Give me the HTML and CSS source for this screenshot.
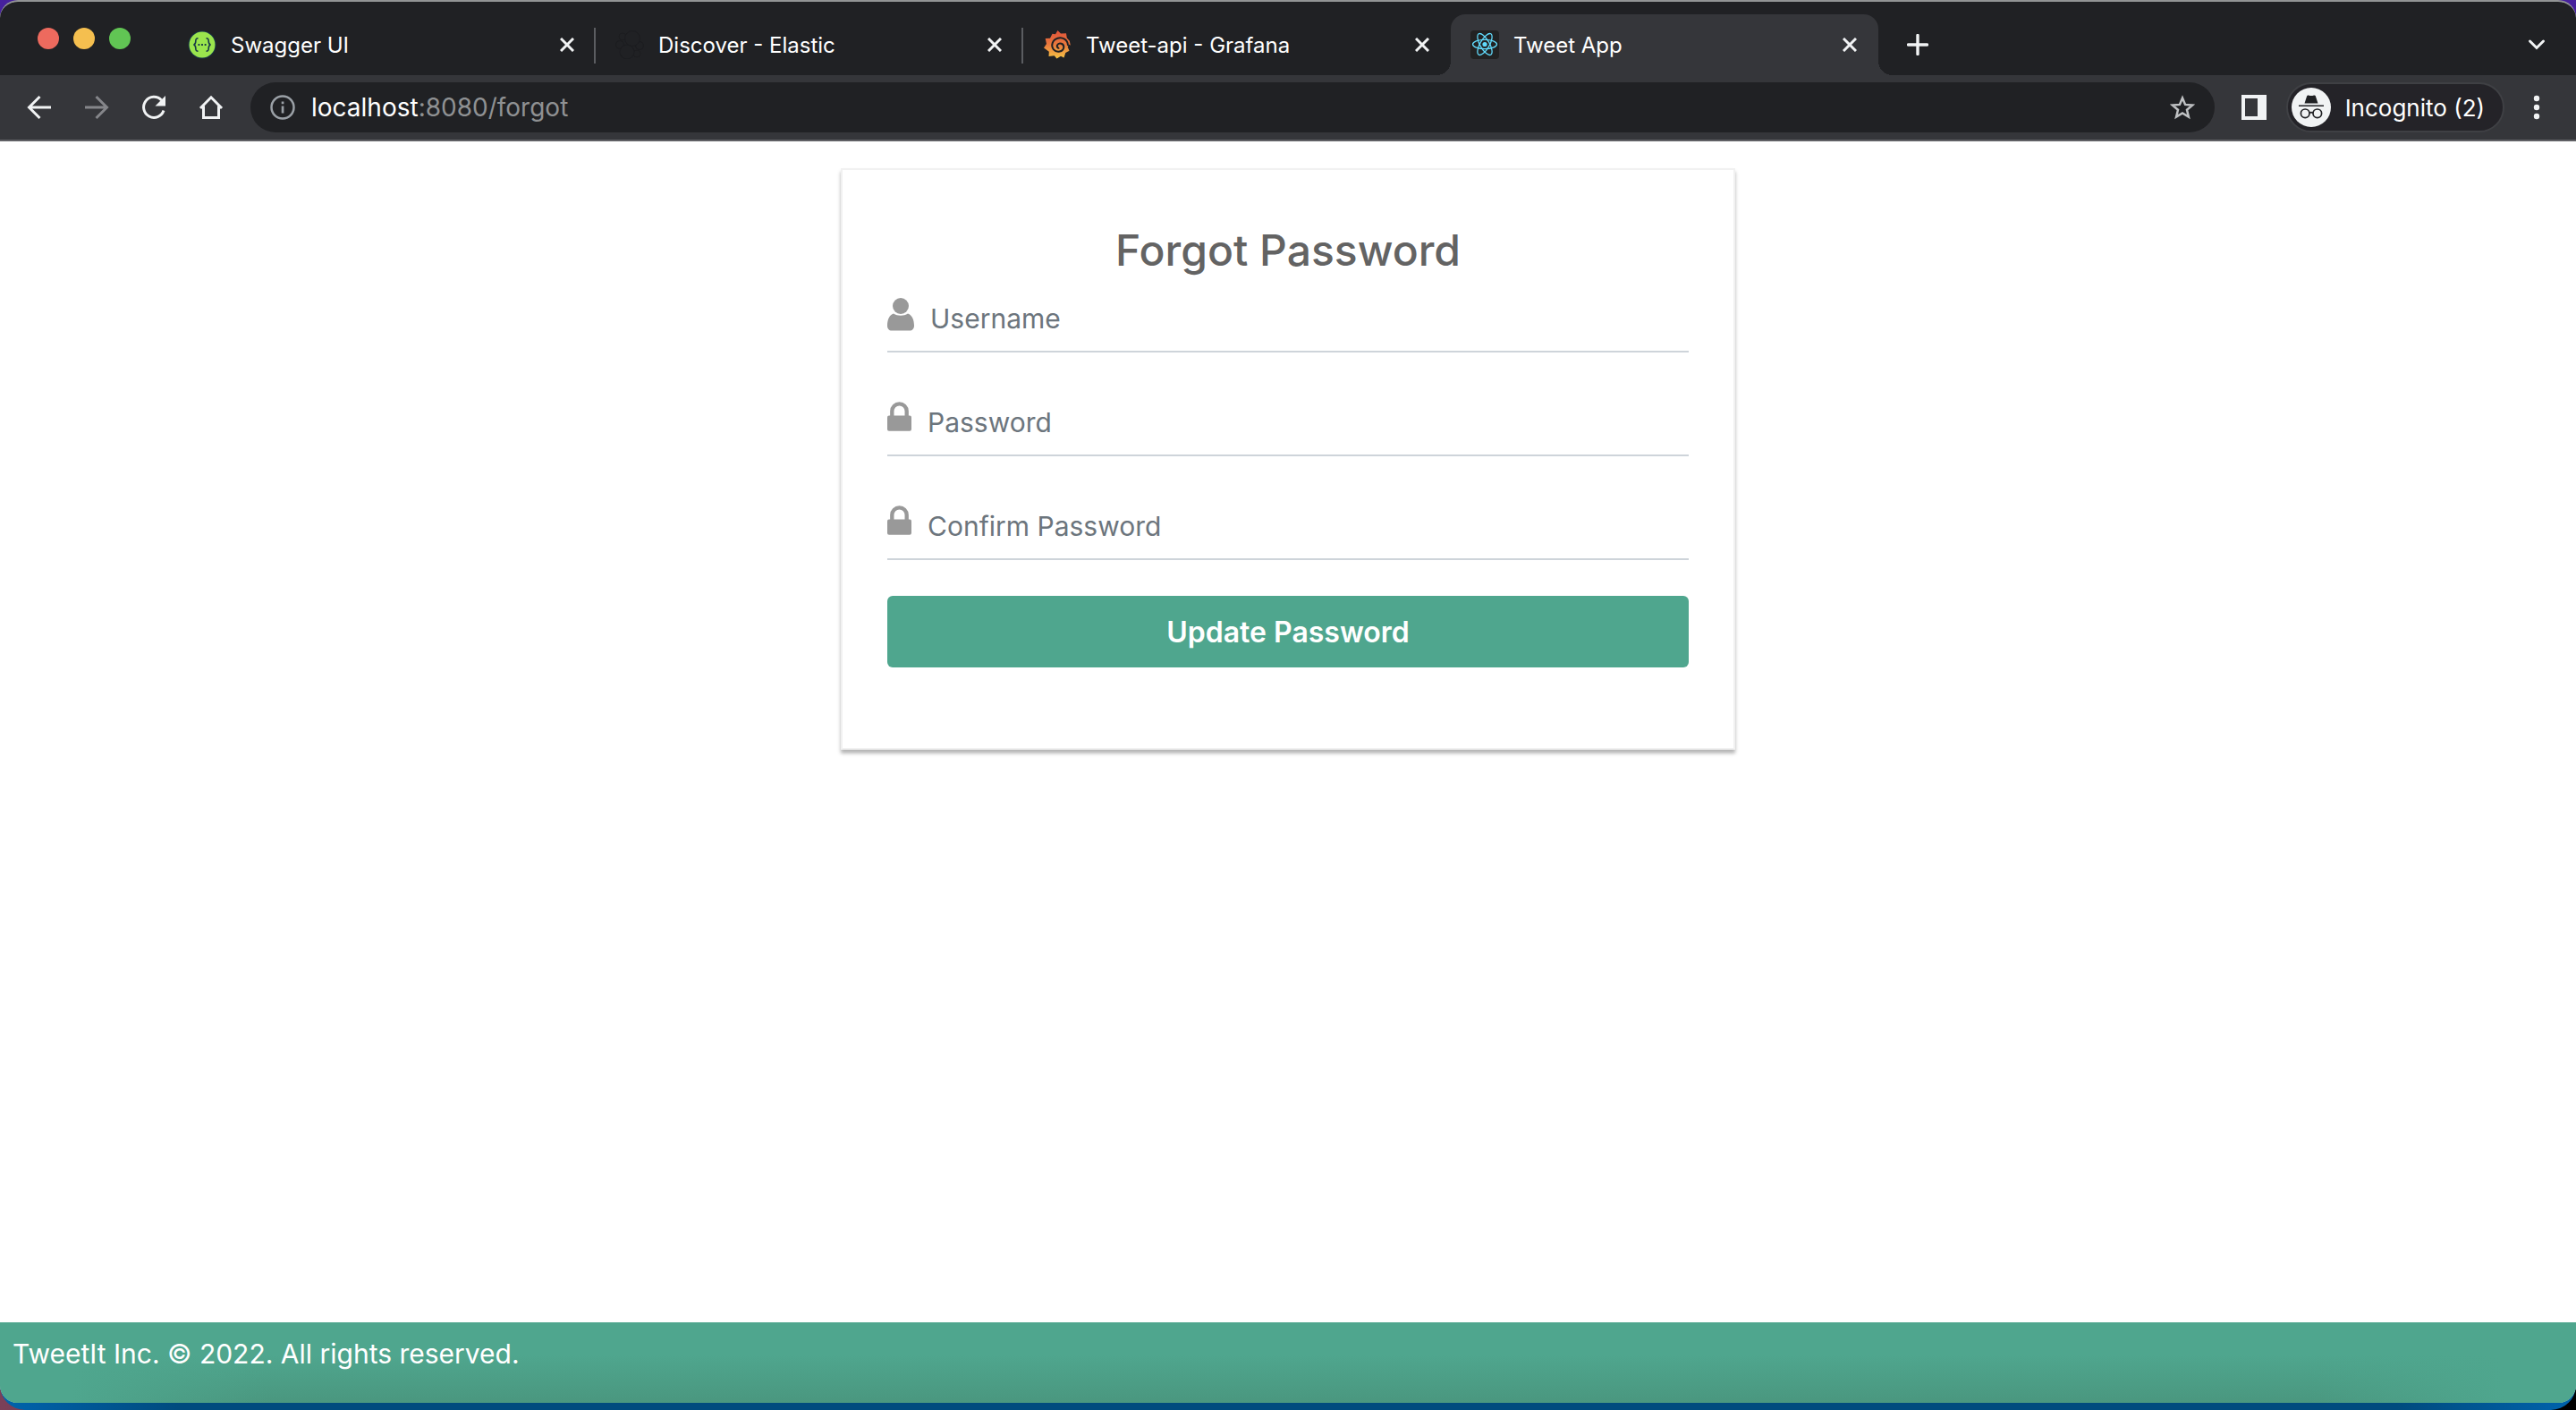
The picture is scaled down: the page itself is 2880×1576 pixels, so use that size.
FILE: index.html
```html
<!DOCTYPE html>
<html lang="en">
<head>
<meta charset="utf-8">
<title>Tweet App</title>
<link rel="stylesheet" href="styles.css">
</head>
<body>
<div class="desktop">
  <div class="window">
    <header class="tabstrip">
      <div class="lights">
        <span class="light light-close"></span>
        <span class="light light-minimize"></span>
        <span class="light light-zoom"></span>
      </div>
      <div class="tab">
        <svg class="favicon" viewBox="0 0 32 32" aria-hidden="true">
          <circle cx="16" cy="16" r="15.5" fill="#173647"/>
          <circle cx="16" cy="16" r="14.500" fill="#9ae54d"/>
          <path d="M11.500 8.800c-2.300 0-2.700.8-2.700 3.200 0 2.500-.2 3.500-2.300 4 2.100.5 2.300 1.500 2.300 4 0 2.400.4 3.200 2.700 3.200M20.500 8.800c2.300 0 2.700.8 2.700 3.200 0 2.500.2 3.500 2.300 4-2.100.5-2.300 1.500-2.300 4 0 2.400-.4 3.200-2.700 3.200" fill="none" stroke="#173647" stroke-width="1.600"/>
          <path d="M11.500 15.100h1.800v1.800h-1.800zM15.100 15.100h1.800v1.800h-1.800zM18.700 15.100h1.800v1.800h-1.800z" fill="#173647"/>
        </svg>
        <span class="tab-title">Swagger UI</span>
        <button class="icon-button tab-close" aria-label="Close tab"><svg viewBox="0 0 16 16"><path d="M1 1l14 14M15 1L1 15"/></svg></button>
      </div>
      <div class="tab">
        <svg class="favicon" viewBox="0 0 32 32" aria-hidden="true">
          <g fill="#202124" stroke="#1c1d20" stroke-width="1">
            <circle cx="5" cy="16" r="4.500"/><circle cx="27" cy="17" r="4.500"/><circle cx="8" cy="7" r="4"/><circle cx="24" cy="26" r="4"/><circle cx="13" cy="24" r="8"/><circle cx="19" cy="9" r="8.500"/>
          </g>
        </svg>
        <span class="tab-title">Discover - Elastic</span>
        <button class="icon-button tab-close" aria-label="Close tab"><svg viewBox="0 0 16 16"><path d="M1 1l14 14M15 1L1 15"/></svg></button>
      </div>
      <div class="tab">
        <svg class="favicon" viewBox="0 0 32 32" aria-hidden="true">
          <defs><linearGradient id="flame" x1="0" y1="0" x2="0" y2="1"><stop offset="0" stop-color="#e0523a"/><stop offset=".5" stop-color="#e9793d"/><stop offset="1" stop-color="#f5c445"/></linearGradient></defs>
          <path fill="url(#flame)" d="M16.500 0l3.500 3.600 6-.4.8 5.300 3 3.300 1 5-1.800-1.300-1.300 3 1.800 4.300-4.200 2.200-1.800 5.500-3.500-1.700-4.500 2.700-2.800-3.300-6.200.8.300-5.200L1 19.500l3-4.500-1.300-6L8 8.800l2.500-5 3.500.4z"/>
          <path d="M28 17C28 10 21.500 7.200 16.500 8.700 10.500 10.500 8.500 17 12 21.300c3.600 4.200 10.500 2.700 11.300-2.300.5-4.300-5.300-6.200-7.300-2.500-.8 1.800.5 3.600 2.300 3.200" fill="none" stroke="#202124" stroke-width="2"/>
        </svg>
        <span class="tab-title">Tweet-api - Grafana</span>
        <button class="icon-button tab-close" aria-label="Close tab"><svg viewBox="0 0 16 16"><path d="M1 1l14 14M15 1L1 15"/></svg></button>
      </div>
      <div class="tab tab-active">
        <svg class="favicon" viewBox="0 0 32 32" aria-hidden="true">
          <rect width="32" height="32" rx="4" fill="#222"/>
          <g fill="none" stroke="#61dafb" stroke-width="1.300" transform="translate(16 15.500)">
            <ellipse rx="13.500" ry="5.200"/><ellipse rx="13.500" ry="5.200" transform="rotate(60)"/><ellipse rx="13.500" ry="5.200" transform="rotate(120)"/>
          </g>
          <circle cx="16" cy="15.500" r="2.600" fill="#61dafb"/>
        </svg>
        <span class="tab-title">Tweet App</span>
        <button class="icon-button tab-close" aria-label="Close tab"><svg viewBox="0 0 16 16"><path d="M1 1l14 14M15 1L1 15"/></svg></button>
      </div>
      <button class="icon-button new-tab" aria-label="New tab"><svg viewBox="0 0 24 24"><path d="M12 1.500v21M1.500 12h21" stroke-width="3.400" stroke-linecap="round"/></svg></button>
      <button class="icon-button tab-search" aria-label="Search tabs"><svg viewBox="0 0 24 24"><path d="M4.500 8l7.500 7.500L19.500 8" stroke-width="3"  stroke-linecap="round"/></svg></button>
    </header>

    <nav class="toolbar" aria-label="Browser">
      <div class="nav-buttons">
        <button class="icon-button nav-button" aria-label="Back"><svg viewBox="0 0 32 32"><path d="M29 16H5M16.500 4L4.500 16l12 12"/></svg></button>
        <button class="icon-button nav-button nav-disabled" aria-label="Forward"><svg viewBox="0 0 32 32"><path d="M3 16h24M15.500 4l12 12-12 12"/></svg></button>
        <button class="icon-button nav-button" aria-label="Reload"><svg viewBox="0 0 32 32"><path d="M27 19.500A11.500 11.500 0 1 1 24.500 8"/><path d="M29 3v11.500H17.500z" fill="#f1f3f4" stroke="none"/></svg></button>
        <button class="icon-button nav-button" aria-label="Home"><svg viewBox="0 0 32 32"><path d="M4 17L16 4.800 28 17M7.500 14.500v13h17v-13"/></svg></button>
      </div>
      <div class="omnibox">
        <svg class="info" viewBox="0 0 28 28" aria-hidden="true"><circle cx="14" cy="14" r="12.500" fill="none" stroke="#9aa0a6" stroke-width="2.500"/><path d="M12.700 12.500h2.700v8h-2.700zM12.700 7.500h2.700v2.800h-2.700z" fill="#9aa0a6"/></svg>
        <span class="url">localhost<span class="url-rest">:8080/forgot</span></span>
        <button class="icon-button star" aria-label="Bookmark this tab"><svg viewBox="0 0 28 28"><path d="M14 3.500l3.100 7.400 8 .7-6.100 5.200 1.900 7.800-6.900-4.200-6.900 4.200L9 16.800l-6.100-5.200 8-.7z" stroke-width="2.500"/></svg></button>
      </div>
      <button class="icon-button side-panel" aria-label="Side panel"><svg viewBox="0 0 28 28"><path fill="#f1f3f4" stroke="none" fill-rule="evenodd" d="M0 0h28v28H0zM4 4v20h14V4z"/></svg></button>
      <button class="profile">
        <svg class="avatar" viewBox="0 0 44 44" aria-hidden="true">
          <circle cx="22" cy="22" r="22" fill="#f1f3f4"/>
          <path d="M14.500 17.500l2.700-8.200c.2-.8 1-1 1.800-.8 2 .7 4 .7 6 0 .8-.2 1.600 0 1.800.8l2.700 8.200z" fill="#202124"/>
          <path d="M8 20.200h28" stroke="#202124" stroke-width="1.600"/>
          <g fill="none" stroke="#202124" stroke-width="1.700"><circle cx="15.200" cy="28.800" r="4.800"/><circle cx="28.800" cy="28.800" r="4.800"/><path d="M20 28.300q2-1.500 4 0"/></g>
        </svg>
        <span>Incognito (2)</span>
      </button>
      <button class="icon-button menu" aria-label="Menu"><svg viewBox="0 0 28 28"><g fill="#f1f3f4" stroke="none"><circle cx="14" cy="4" r="3.200"/><circle cx="14" cy="14" r="3.200"/><circle cx="14" cy="24" r="3.200"/></g></svg></button>
    </nav>

    <main class="page">
      <form class="card">
        <h1 class="card-title">Forgot Password</h1>
        <div class="fields">
          <div class="field">
            <label for="username" aria-label="Username"><svg class="icon-user" viewBox="0 0 30 37"><ellipse cx="15" cy="9" rx="9" ry="9"/><path d="M7 17.500C2.500 19 0 24 0 31c0 3.500 2 5.500 5 5.500h20c3 0 5-2 5-5.500 0-7-2.500-12-7-13.500-4.500 3-11.500 3-16 0z"/></svg></label>
            <input class="input" id="username" type="text" placeholder="Username">
          </div>
          <div class="field">
            <label for="password" aria-label="Password"><svg class="icon-lock" viewBox="0 0 28 34"><path d="M2 16h24a2 2 0 0 1 2 2v14a2 2 0 0 1-2 2H2a2 2 0 0 1-2-2V18a2 2 0 0 1 2-2z"/><path d="M5.500 17v-6a8.500 8.500 0 0 1 17 0v6" fill="none" stroke="#999" stroke-width="4.500"/></svg></label>
            <input class="input" id="password" type="password" placeholder="Password">
          </div>
          <div class="field">
            <label for="confirm" aria-label="Confirm Password"><svg class="icon-lock" viewBox="0 0 28 34"><path d="M2 16h24a2 2 0 0 1 2 2v14a2 2 0 0 1-2 2H2a2 2 0 0 1-2-2V18a2 2 0 0 1 2-2z"/><path d="M5.500 17v-6a8.500 8.500 0 0 1 17 0v6" fill="none" stroke="#999" stroke-width="4.500"/></svg></label>
            <input class="input" id="confirm" type="password" placeholder="Confirm Password">
          </div>
        </div>
        <button class="submit" type="submit">Update Password</button>
      </form>
    </main>

    <footer class="footer">TweetIt Inc. © 2022. All rights reserved.</footer>
  </div>
</div>
</body>
</html>
```
FILE: styles.css
```css
* { box-sizing: border-box; }

html { background: linear-gradient(to right, #7a4058, #000); }

body {
  margin: 0;
  font-family: Inter, "Liberation Sans", sans-serif;
  font-size: 30px;
  color: #fff;
}

button, input { font: inherit; color: inherit; }

.desktop {
  display: flex;
  min-height: 100vh;
  padding-bottom: 8px;
  border-radius: 0 0 28px 28px;
  background:
    linear-gradient(to bottom, #46219c 40px, transparent 60px),
    linear-gradient(to right, #0063ad, #004b7e 200px, #004b7e calc(100% - 200px), #0063ad);
}

.window {
  flex: 1;
  min-width: 0;
  display: flex;
  flex-direction: column;
  border-top: 2px solid #929495;
  border-radius: 20px;
  background: #fff;
  overflow: hidden;
}

.icon-button {
  flex: none;
  padding: 0;
  border: 0;
  background: none;
}

.icon-button svg {
  display: block;
  width: 100%;
  fill: none;
  stroke: #f1f3f4;
}

/* Tab strip */
.tabstrip {
  display: flex;
  align-items: flex-end;
  height: 82px;
  background: #202124;
}

.lights {
  flex: none;
  display: flex;
  gap: 16px;
  width: 188px;
  padding: 0 42px 29px;
}

.light {
  flex: none;
  width: 24px;
  height: 24px;
  border-radius: 50%;
}

.light-close { background: #ed6a5e; }
.light-minimize { background: #f5bf4f; }
.light-zoom { background: #61c554; }

.tab {
  position: relative;
  flex: 0 1 478px;
  min-width: 0;
  display: flex;
  align-items: center;
  gap: 16px;
  height: 68px;
  padding: 0 24px 0 22px;
  font-size: 24px;
}

.tab:not(.tab-active)::after {
  content: "";
  position: absolute;
  right: 0;
  top: 15px;
  width: 2px;
  height: 40px;
  background: #5b5d61;
}

.tab:has(+ .tab-active)::after { display: none; }

.tab-active {
  border-radius: 16px 16px 0 0;
  background: #35363a;
}

.tab-active::before,
.tab-active::after {
  content: "";
  position: absolute;
  bottom: 0;
  width: 16px;
  height: 16px;
}

.tab-active::before {
  right: 100%;
  background: radial-gradient(circle at 0 0, #202124 16px, #35363a 16px);
}

.tab-active::after {
  left: 100%;
  background: radial-gradient(circle at 100% 0, #202124 16px, #35363a 16px);
}

.favicon {
  flex: none;
  width: 32px;
  height: 32px;
}

.tab-title {
  flex: 1;
  overflow: hidden;
  white-space: nowrap;
}

.tab-close { width: 16px; }
.tab-close svg { stroke-width: 3; }

.new-tab {
  width: 24px;
  margin: 0 auto 22px 32px;
}

.tab-search {
  width: 24px;
  margin: 0 32px 22px;
}

/* Toolbar */
.toolbar {
  display: flex;
  align-items: center;
  height: 74px;
  padding: 0 30px 0 28px;
  border-bottom: 2px solid #5f6064;
  background: #35363a;
  font-size: 28px;
}

.nav-buttons {
  flex: none;
  display: flex;
  gap: 32px;
}

.nav-button { width: 32px; }
.nav-button svg { stroke-width: 3; }
.nav-disabled svg { stroke: #85868a; }

.omnibox {
  flex: 1;
  display: flex;
  align-items: center;
  height: 56px;
  margin: 0 30px 0 28px;
  padding: 0 22px;
  border-radius: 28px;
  background: #202124;
}

.info {
  flex: none;
  width: 28px;
}

.url {
  flex: 1;
  padding-left: 18px;
}

.url-rest { color: #8f9193; }

.star { width: 28px; }
.star svg { stroke: #bfc1c3; }
.side-panel { width: 28px; }

.profile {
  flex: none;
  display: flex;
  align-items: center;
  gap: 16px;
  height: 56px;
  margin: 0 22px;
  padding: 0 20px 0 4px;
  border: 2px solid #3f4044;
  border-radius: 28px;
  background: #242328;
  font-size: 26px;
}

.avatar { width: 44px; }
.menu { width: 28px; }

/* Page */
.page {
  flex: 1;
  padding: 30px 0;
}

.card {
  width: 1000px;
  max-width: 100%;
  margin: 0 auto;
  padding: 50px 50px 90px;
  border: 2px solid #f1f1f1;
  background: #fff;
  box-shadow: 0 4px 4px rgba(0, 0, 0, 0.3);
}

.card-title {
  margin: 0 0 12px;
  font-size: 48px;
  font-weight: 500;
  line-height: 80px;
  text-align: center;
  color: #636363;
}

.fields {
  display: grid;
  gap: 54px;
}

.field {
  display: flex;
  align-items: flex-start;
  gap: 18px;
  padding-bottom: 12px;
  border-bottom: 2px solid #ced4da;
}

.field svg {
  display: block;
  margin-top: 1px;
  fill: #999;
}

.icon-user { width: 30px; }
.icon-lock { width: 27px; }

.input {
  flex: 1;
  min-width: 0;
  height: 48px;
  padding: 0;
  border: 0;
  outline: 0;
  background: none;
  color: #495057;
}

.input::placeholder {
  color: #6c757d;
  opacity: 1;
}

.submit {
  display: block;
  width: 100%;
  height: 80px;
  margin-top: 40px;
  border: 0;
  border-radius: 6px;
  background: #4fa68e;
  font-size: 32px;
  font-weight: 600;
}

.footer {
  height: 90px;
  padding: 10px 14px;
  background: linear-gradient(to right, #4fa68e 80px, rgba(79, 166, 142, 0) 300px, rgba(79, 166, 142, 0) calc(100% - 300px), #4fa68e calc(100% - 80px)), linear-gradient(to bottom, #4fa68e 40%, #4a977f);
  line-height: 50px;
}
```
